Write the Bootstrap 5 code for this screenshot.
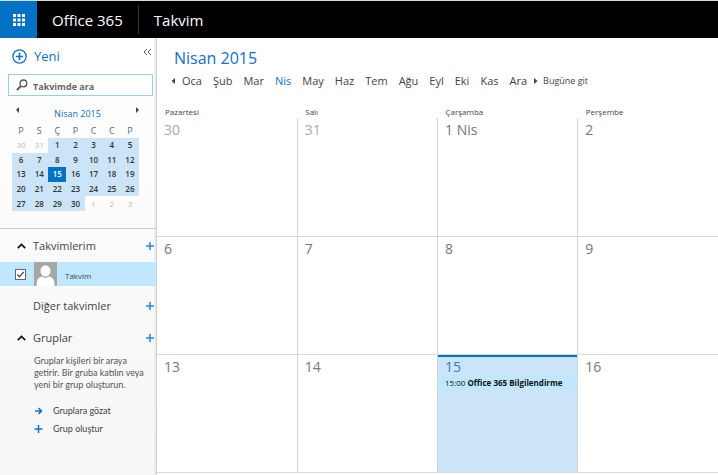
<!DOCTYPE html>
<html lang="tr">
<head>
<meta charset="utf-8">
<meta name="viewport" content="width=device-width, initial-scale=1">
<title>Takvim - Office 365</title>
<link href="https://cdn.jsdelivr.net/npm/bootstrap@5.3.0/dist/css/bootstrap.min.css" rel="stylesheet">
<style>
  body { font-family: "Open Sans", "Noto Sans", sans-serif; font-size: 11px; line-height: 16px; color: #444; background: #fff; }
  button { font: inherit; color: inherit; background: none; border: 0; padding: 0; }
  a { color: inherit; text-decoration: none; }
  svg { display: block; flex: none; }
  .topbar { height: 38px; background: #000; color: #fff; font-size: 15px; border-top: 1px solid #d8dcda; }
  .launcher { width: 37px; background: #0072c6; }
  .brand { padding: 0 15px; }
  .brand-rule { width: 1px; height: 29px; background: #3a3a3a; }
  .blue { color: #0f72c5; }
  .side { width: 157px; background: linear-gradient(#fff, #f6f6f6); border-right: 1px solid #d2d2d2; box-shadow: inset -2px 0 2px -1px #e0e0e0; }
  .new-btn { font-size: 13px; line-height: 20px; gap: 7px; }
  .search { height: 22px; border: 1px solid #9ccbed; margin: 8px 3px 0 8px; padding: 0 7px; background: #fff; }
  .search input { border: 0; outline: 0; background: none; font-size: 9px; line-height: 14px; font-weight: 700; color: #555; padding: 3px 0 0; margin-left: 5px; }
  .search input::placeholder { color: #666; opacity: 1; }
  .mini-head { margin: 10px 16px 0 15px; line-height: 16px; font-size: 9px; }
  .mini { width: 127px; height: 87px; margin: 2px 0 0 12px; table-layout: fixed; font-size: 8px; line-height: 14px; text-align: center; }
  .mini th, .mini td { padding: 0; }
  .mini th { font-size: 9px; font-weight: 400; color: #666; text-align: center; }
  .mini td { font-weight: 600; background: #cce4f7; color: #333; }
  .mini .off { background: none; color: #bbb; font-weight: 400; }
  .mini .now { background: #0072c6; color: #fff; }
  .groups { margin-top: 17px; border-top: 1px solid #ccc; padding-top: 5px; }
  .sec { height: 24px; padding: 0 2px 0 17px; font-size: 11px; }
  .sec-icon { width: 16px; }
  .sec-next { margin-top: 8px; }
  .picked { height: 24px; margin-top: 4px; background: #bfe8ff; padding-left: 15px; font-size: 8px; }
  .tick { appearance: none; width: 11px; height: 11px; margin: 0; border: 1px solid #666; background: #fff url("data:image/svg+xml,%3Csvg xmlns='http://www.w3.org/2000/svg' viewBox='0 0 9 9'%3E%3Cpath d='M1.5 4.5l2 2.3L7.7 1.8' fill='none' stroke='%23444' stroke-width='1.3'/%3E%3C/svg%3E"); }
  .sec-text, .sec-links { font-family: Lato, "Open Sans", sans-serif; font-size: 9px; }
  .sec-text { margin: 5px 8px 0 34px; line-height: 12px; color: #555; }
  .sec-links { margin: 11px 0 0 34px; line-height: 18px; }
  .sec-links a { gap: 10px; }
  .main-title { font-size: 16px; line-height: 24px; font-weight: 400; margin: 8px 0 0 17px; }
  .months { margin: 3px 0 0 14px; gap: 11px; line-height: 16px; }
  .month-edge { gap: 7px; }
  .months .go { gap: 5px; font-size: 9px; }
  .cal { table-layout: fixed; margin-top: 16px; }
  .cal th { font-size: 8px; line-height: 13px; font-weight: 400; padding: 0 0 0 8px; color: #444; }
  .cal td { height: 118px; padding: 3px 0 0 7px; vertical-align: top; border-right: 1px solid #d4d4d4; border-bottom: 1px solid #d9d9d9; font-size: 14px; line-height: 18px; color: #777; }
  .cal td:last-child { border-right: 0; }
  .cal .past { color: #aaa; }
  .cal .today { padding-left: 0; background: #cce4f7; color: #2a7fcb; box-shadow: inset 0 2px #0072c6; }
  .today-num { padding-left: 7px; }
  .event { display: block; width: 100%; padding-left: 7px; background: #bfe8ff; color: #111; font-size: 8px; line-height: 14px; text-align: left; white-space: nowrap; }
</style>
<script src="https://cdn.jsdelivr.net/npm/bootstrap@5.3.0/dist/js/bootstrap.bundle.min.js"></script>
</head>
<body class="d-flex flex-column min-vh-100">
<header class="topbar d-flex align-items-center">
  <button class="launcher align-self-stretch d-flex align-items-center justify-content-center" aria-label="Uygulamalar">
    <svg width="12" height="12" viewBox="0 0 12 12" fill="#fff"><path d="M0 0h3v3H0zM4.5 0h3v3h-3zM9 0h3v3H9zM0 4.5h3v3H0zM4.5 4.5h3v3h-3zM9 4.5h3v3H9zM0 9h3v3H0zM4.5 9h3v3h-3zM9 9h3v3H9z"/></svg>
  </button>
  <a class="brand" href="#">Office 365</a>
  <span class="brand-rule"></span>
  <a class="brand" href="#">Takvim</a>
</header>
<div class="d-flex flex-grow-1">
  <aside class="side flex-shrink-0">
    <div class="d-flex justify-content-between ps-2 pe-1 pt-2 ms-1">
      <button class="new-btn blue d-flex align-items-center">
        <svg width="15" height="15" viewBox="0 0 15 15" fill="none" stroke="#0f72c5" stroke-width="1.3"><circle cx="7.5" cy="7.5" r="6.6"/><path d="M7.5 3.8v7.4M3.8 7.5h7.4" stroke-width="1.6"/></svg>
        Yeni
      </button>
      <button class="align-self-start" aria-label="Daralt"><svg width="9" height="11" viewBox="0 0 9 11" fill="none" stroke="#555"><path d="M4 3L1 6l3 3M8 3L5 6l3 3"/></svg></button>
    </div>
    <div class="search d-flex align-items-center">
      <svg width="12" height="12" viewBox="0 0 12 12" fill="none" stroke="#555"><circle cx="7.4" cy="4.4" r="3.4" stroke-width="1.3"/><path d="M4.9 7L.9 11" stroke-width="1.8"/></svg>
      <input class="w-100" type="text" placeholder="Takvimde ara" aria-label="Takvimde ara">
    </div>
    <div class="mini-head d-flex justify-content-between">
      <button class="align-self-start" aria-label="Önceki ay"><svg width="5" height="8" viewBox="0 0 5 8" fill="#444"><path d="M4 1v6L1 4z"/></svg></button>
      <span class="blue">Nisan 2015</span>
      <button class="align-self-start" aria-label="Sonraki ay"><svg width="5" height="8" viewBox="0 0 5 8" fill="#444"><path d="M1 1v6l3-3z"/></svg></button>
    </div>
    <table class="mini">
      <thead><tr><th>P</th><th>S</th><th>Ç</th><th>P</th><th>C</th><th>C</th><th>P</th></tr></thead>
      <tbody>
        <tr><td class="off">30</td><td class="off">31</td><td>1</td><td>2</td><td>3</td><td>4</td><td>5</td></tr>
        <tr><td>6</td><td>7</td><td>8</td><td>9</td><td>10</td><td>11</td><td>12</td></tr>
        <tr><td>13</td><td>14</td><td class="now">15</td><td>16</td><td>17</td><td>18</td><td>19</td></tr>
        <tr><td>20</td><td>21</td><td>22</td><td>23</td><td>24</td><td>25</td><td>26</td></tr>
        <tr><td>27</td><td>28</td><td>29</td><td>30</td><td class="off">1</td><td class="off">2</td><td class="off">3</td></tr>
      </tbody>
    </table>
    <div class="groups">
      <div class="sec d-flex align-items-center">
        <button class="sec-icon" aria-label="Takvimlerim listesini daralt"><svg width="9" height="6" viewBox="0 0 9 6" fill="none" stroke="#111" stroke-width="1.7"><path d="M.8 5.2l3.7-3.7 3.7 3.7"/></svg></button>
        <span class="flex-grow-1">Takvimlerim</span>
        <button aria-label="Takvim ekle"><svg width="8" height="8" viewBox="0 0 8 8" stroke="#2288dc" stroke-width="1.5"><path d="M4 0v8M0 4h8"/></svg></button>
      </div>
      <label class="picked d-flex align-items-center">
        <input class="tick" type="checkbox" checked>
        <svg class="ms-2" width="23" height="24" viewBox="0 0 23 24"><path d="M0 0h23v24H0z" fill="#a6a6a6"/><g fill="#fff"><ellipse cx="11.5" cy="9" rx="5" ry="5.8"/><path d="M2.5 24c0-7 2-9 6-9.5 2 1.5 4 1.5 6 0 4 .5 6 2.5 6 9.5z"/></g><path d="M7.5 13.5c2.5 2.3 5.5 2.3 8 0" fill="none" stroke="#a6a6a6" stroke-width=".8"/></svg>
        <span class="ms-2 pt-1">Takvim</span>
      </label>
      <div class="sec sec-next d-flex align-items-center">
        <span class="sec-icon"></span>
        <span class="flex-grow-1">Diğer takvimler</span>
        <button aria-label="Diğer takvim ekle"><svg width="8" height="8" viewBox="0 0 8 8" stroke="#2288dc" stroke-width="1.5"><path d="M4 0v8M0 4h8"/></svg></button>
      </div>
      <div class="sec sec-next d-flex align-items-center">
        <button class="sec-icon" aria-label="Gruplar listesini daralt"><svg width="9" height="6" viewBox="0 0 9 6" fill="none" stroke="#111" stroke-width="1.7"><path d="M.8 5.2l3.7-3.7 3.7 3.7"/></svg></button>
        <span class="flex-grow-1">Gruplar</span>
        <button aria-label="Grup ekle"><svg width="8" height="8" viewBox="0 0 8 8" stroke="#2288dc" stroke-width="1.5"><path d="M4 0v8M0 4h8"/></svg></button>
      </div>
      <p class="sec-text">Gruplar kişileri bir araya getirir. Bir gruba katılın veya yeni bir grup oluşturun.</p>
      <nav class="sec-links">
        <a class="d-flex align-items-center" href="#"><svg width="9" height="8" viewBox="0 0 9 8" fill="none" stroke="#0f72c5" stroke-width="1.5"><path d="M1 4h6.5M4.500 1l3 3-3 3"/></svg>Gruplara gözat</a>
        <a class="d-flex align-items-center" href="#"><svg width="9" height="8" viewBox="0 0 9 8" stroke="#0f72c5" stroke-width="1.5"><path d="M4.5 0v8M.5 4h8"/></svg>Grup oluştur</a>
      </nav>
    </div>
  </aside>
  <main class="flex-grow-1">
    <h1 class="main-title blue">Nisan 2015</h1>
    <nav class="months d-flex align-items-center">
      <span class="month-edge d-flex align-items-center"><button aria-label="Önceki yıl"><svg width="4" height="6" viewBox="0 0 4 6" fill="#444"><path d="M4 0v6L.5 3z"/></svg></button><a href="#">Oca</a></span>
      <a href="#">Şub</a><a href="#">Mar</a><a class="blue" href="#">Nis</a><a href="#">May</a><a href="#">Haz</a><a href="#">Tem</a><a href="#">Ağu</a><a href="#">Eyl</a><a href="#">Eki</a><a href="#">Kas</a>
      <span class="month-edge d-flex align-items-center"><a href="#">Ara</a><span class="go d-flex align-items-center"><button aria-label="Sonraki yıl"><svg width="4" height="6" viewBox="0 0 4 6" fill="#444"><path d="M0 0v6l3.5-3z"/></svg></button><a href="#">Bugüne git</a></span></span>
    </nav>
    <table class="cal w-100">
      <thead><tr><th>Pazartesi</th><th>Salı</th><th>Çarşamba</th><th>Perşembe</th></tr></thead>
      <tbody>
        <tr><td class="past">30</td><td class="past">31</td><td>1 Nis</td><td>2</td></tr>
        <tr><td>6</td><td>7</td><td>8</td><td>9</td></tr>
        <tr><td>13</td><td>14</td><td class="today"><div class="today-num">15</div><button class="event">15:00 <b>Office 365 Bilgilendirme</b></button></td><td>16</td></tr>
      </tbody>
    </table>
  </main>
</div>
</body>
</html>
